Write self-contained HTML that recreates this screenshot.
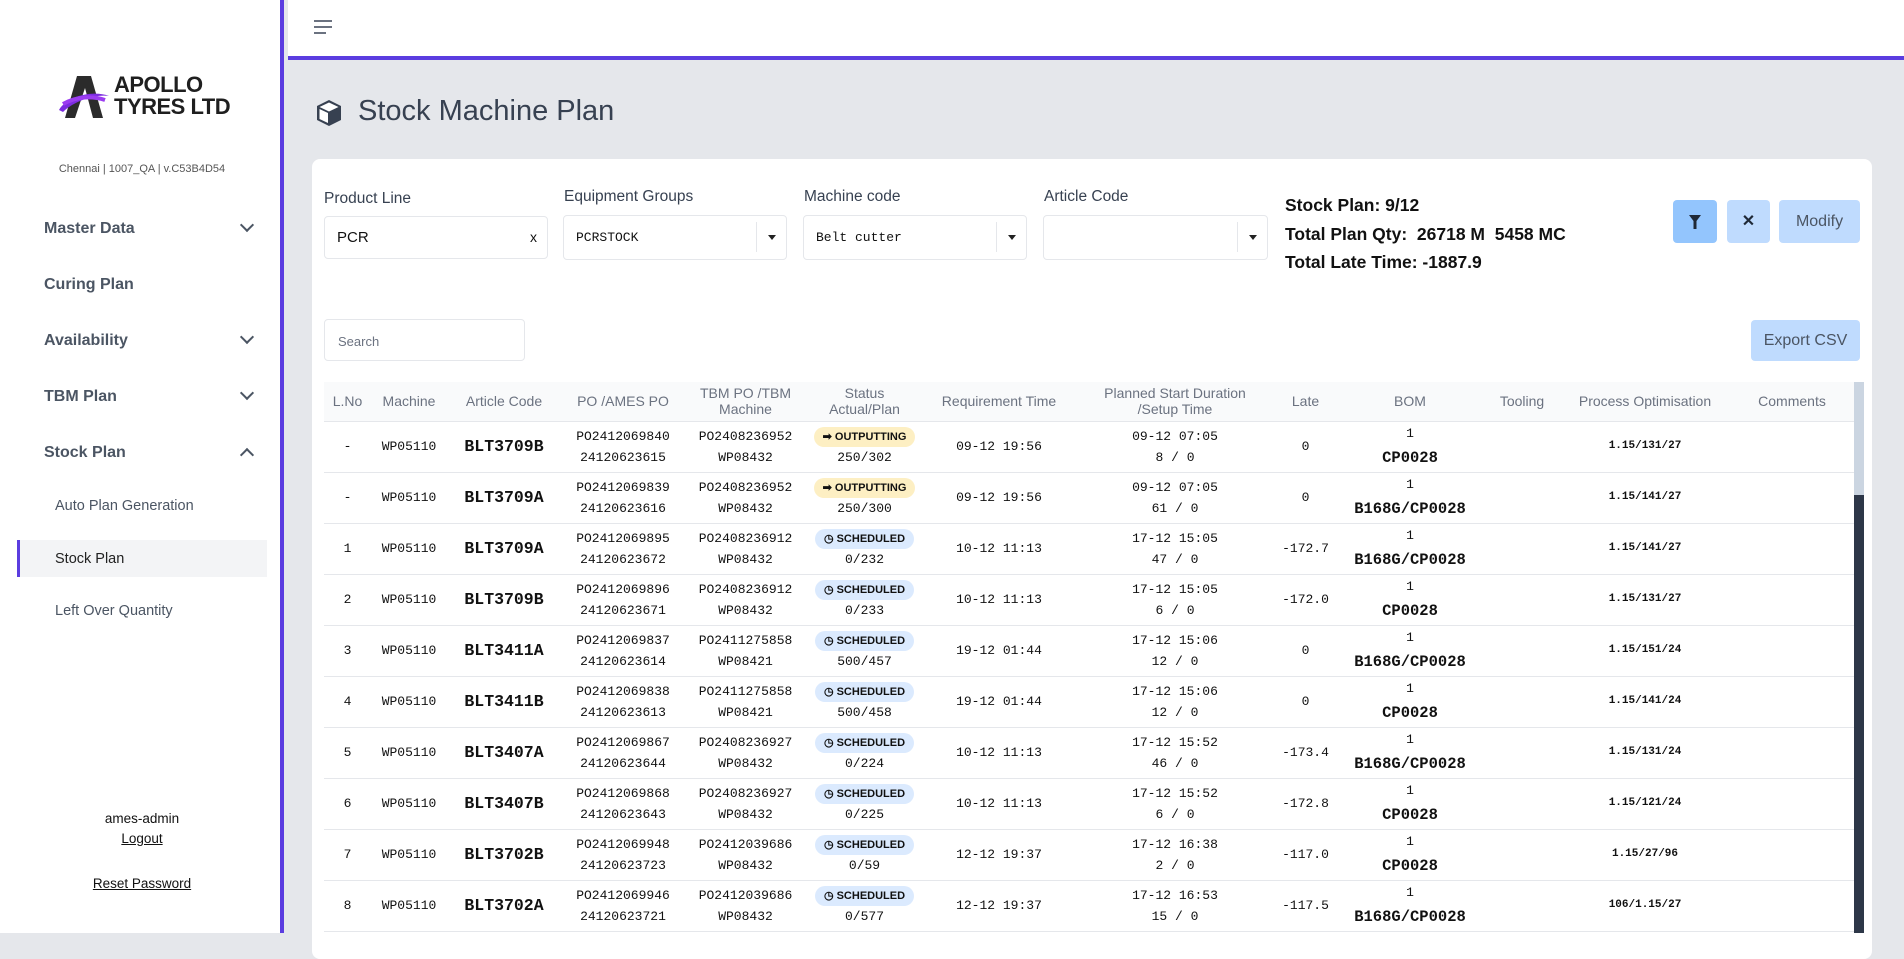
<!DOCTYPE html>
<html><head><meta charset="utf-8"><style>
*{box-sizing:border-box;margin:0;padding:0}
html{background:#e5e7eb}
body{width:1904px;height:933px;overflow:hidden;background:#e5e7eb;font-family:"Liberation Sans",sans-serif;position:relative}
.side{position:absolute;left:0;top:0;width:284px;height:933px;background:#fff;border-right:4px solid #5b3de0}
.top{position:absolute;left:288px;top:0;right:0;height:60px;background:#fff;border-bottom:4px solid #5b3de0}
.mi{position:absolute;left:44px;font-size:16px;font-weight:bold;color:#4b5563}
.chev{position:absolute;left:242px;width:10px;height:10px;border-right:2.5px solid #4b5563;border-bottom:2.5px solid #4b5563}
.si{position:absolute;left:55px;font-size:14.5px;color:#4b5563}
.card{position:absolute;left:312px;top:159px;width:1560px;height:800px;background:#fff;border-radius:8px}
.lbl{position:absolute;top:190px;font-size:15.5px;color:#374151}
.inp{position:absolute;top:216px;height:43px;border:1px solid #e5e7eb;border-radius:4px;background:#fff;font-family:"Liberation Mono",monospace;font-size:13px;color:#111;padding:14px 0 0 12px}
.dd{position:absolute;right:0;top:6px;width:30px;height:30px;border-left:1px solid #e5e7eb}
.dd:after{content:"";position:absolute;left:11px;top:13px;border:4px solid transparent;border-top:5px solid #222}
.st{position:absolute;left:1285px;font-size:17.5px;font-weight:bold;color:#111}
.btn{position:absolute;top:200px;height:43px;border-radius:4px;background:#bfdbfe;color:#4b5563;font-size:16px;text-align:center;line-height:43px}
table{position:absolute;left:324px;top:382px;width:1530px;border-collapse:collapse;table-layout:fixed}
th{height:39px;background:#f9fafb;color:#6b7280;font-weight:normal;font-size:14px;line-height:16px;border-bottom:1px solid #e5e7eb}
td{height:51px;text-align:center;font-family:"Liberation Mono",monospace;font-size:13px;color:#111;border-bottom:1px solid #e5e7eb;line-height:21px;vertical-align:middle}
td.ac{font-size:16.5px;font-weight:bold}
.bom{line-height:24px}.bom b{font-size:15.5px}
.bd{display:inline-block;height:20px;line-height:20px;border-radius:10px;padding:0 9px;font-size:11px;font-weight:bold;font-family:"Liberation Sans",sans-serif}
.o{background:#fdefc3}.s{background:#dbeafe}
td.po{font-size:11px;font-weight:bold}
</style></head><body>
<div class="side">
  <svg style="position:absolute;left:57px;top:74px" width="54" height="46" viewBox="0 0 54 46"><path d="M8 44 L20 2 L34 2 L46 44 L36 44 L28 14 L18 44 Z" fill="#2b2b2b"/><path d="M2 36 C10 22,36 16,52 22 C40 20,18 26,6 38 Z" fill="#7c2ce0"/><path d="M6 30 C20 22,36 22,48 26" stroke="#9b3cf0" stroke-width="4" fill="none"/></svg>
  <div style="position:absolute;left:114px;top:74px;font-size:22px;font-weight:bold;line-height:22px;color:#1f1f1f;letter-spacing:-0.5px">APOLLO<br>TYRES LTD</div>
  <div style="position:absolute;left:0;width:284px;text-align:center;top:163px;font-size:11px;color:#555">Chennai | 1007_QA | v.C53B4D54</div>
  <div class="mi" style="top:220px">Master Data</div><div class="chev" style="top:220px;transform:rotate(45deg)"></div>
  <div class="mi" style="top:276px">Curing Plan</div>
  <div class="mi" style="top:332px">Availability</div><div class="chev" style="top:332px;transform:rotate(45deg)"></div>
  <div class="mi" style="top:388px">TBM Plan</div><div class="chev" style="top:388px;transform:rotate(45deg)"></div>
  <div class="mi" style="top:444px">Stock Plan</div><div class="chev" style="top:450px;transform:rotate(225deg)"></div>
  <div class="si" style="top:498px">Auto Plan Generation</div>
  <div style="position:absolute;left:17px;top:540px;width:250px;height:37px;background:#f3f4f6;border-left:3px solid #5b3de0"></div>
  <div class="si" style="top:551px;color:#222">Stock Plan</div>
  <div class="si" style="top:603px">Left Over Quantity</div>
  <div style="position:absolute;left:0;width:284px;text-align:center;top:811px;font-size:13.5px;color:#111">ames-admin</div>
  <div style="position:absolute;left:0;width:284px;text-align:center;top:831px;font-size:13.5px;color:#111;text-decoration:underline">Logout</div>
  <div style="position:absolute;left:0;width:284px;text-align:center;top:876px;font-size:13.5px;color:#111;text-decoration:underline">Reset Password</div>
</div>
<div class="top"><div style="position:absolute;left:26px;top:20px;width:18px;height:2px;background:#6b7280"></div><div style="position:absolute;left:26px;top:26px;width:18px;height:2px;background:#6b7280"></div><div style="position:absolute;left:26px;top:32px;width:12px;height:2px;background:#6b7280"></div></div>
<svg style="position:absolute;left:315px;top:98px" width="28" height="30" viewBox="0 0 28 30"><path d="M14 2 L26 8 L26 22 L14 28 L2 22 L2 8 Z" fill="#374151"/><path d="M14 4.5 L23.5 9 L14 13.5 L4.5 9 Z" fill="#fff"/><path d="M4.5 11 L13 15 L13 25 L4.5 21 Z" fill="#fff"/></svg>
<div style="position:absolute;left:358px;top:95px;font-size:29px;color:#374151">Stock Machine Plan</div>
<div class="card"></div>
<div class="lbl" style="left:324px">Product Line</div>
<div class="lbl" style="left:564px;top:188px">Equipment Groups</div>
<div class="lbl" style="left:804px;top:188px">Machine code</div>
<div class="lbl" style="left:1044px;top:188px">Article Code</div>
<div class="inp" style="left:324px;width:224px;font-family:'Liberation Sans',sans-serif;font-size:15px;padding-top:12px">PCR<span style="position:absolute;right:10px;font-size:14px">x</span></div>
<div class="inp" style="left:563px;width:224px;top:215px;height:45px">PCRSTOCK<div class="dd"></div></div>
<div class="inp" style="left:803px;width:224px;top:215px;height:45px">Belt cutter<div class="dd"></div></div>
<div class="inp" style="left:1043px;width:225px;top:215px;height:45px"><div class="dd"></div></div>
<div class="st" style="top:195px">Stock Plan: 9/12</div>
<div class="st" style="top:224px">Total Plan Qty:&nbsp; 26718 M&nbsp; 5458 MC</div>
<div class="st" style="top:252px">Total Late Time: -1887.9</div>
<div class="btn" style="left:1673px;width:44px;background:#93c5fd"><svg width="12" height="14" viewBox="0 0 12 14" style="vertical-align:middle"><path d="M0 0 H12 L7.5 6 V14 H4.5 V6 Z" fill="#1f2937"/></svg></div>
<div class="btn" style="left:1727px;width:43px;font-weight:bold;color:#1f2937">✕</div>
<div class="btn" style="left:1779px;width:81px">Modify</div>
<div style="position:absolute;left:324px;top:319px;width:201px;height:42px;border:1px solid #e5e7eb;border-radius:4px;font-size:13px;color:#6b7280;padding:14px 0 0 13px">Search</div>
<div class="btn" style="left:1751px;top:320px;width:109px;height:41px;line-height:41px">Export CSV</div>
<table>
<colgroup><col style="width:47px"><col style="width:76px"><col style="width:114px"><col style="width:124px"><col style="width:121px"><col style="width:117px"><col style="width:152px"><col style="width:200px"><col style="width:61px"><col style="width:148px"><col style="width:76px"><col style="width:170px"><col style="width:124px"></colgroup>
<tr><th>L.No</th><th>Machine</th><th>Article Code</th><th>PO /AMES PO</th><th>TBM PO /TBM<br>Machine</th><th>Status<br>Actual/Plan</th><th>Requirement Time</th><th>Planned Start Duration<br>/Setup Time</th><th>Late</th><th>BOM</th><th>Tooling</th><th>Process Optimisation</th><th>Comments</th></tr>
<tr><td>-</td><td>WP05110</td><td class="ac">BLT3709B</td><td>PO2412069840<br>24120623615</td><td>PO2408236952<br>WP08432</td><td><span class="bd o">➡ OUTPUTTING</span><br>250/302</td><td>09-12 19:56</td><td>09-12 07:05<br>8 / 0</td><td>0</td><td class="bom">1<br><b>CP0028</b></td><td></td><td class="po">1.15/131/27</td><td></td></tr>
<tr><td>-</td><td>WP05110</td><td class="ac">BLT3709A</td><td>PO2412069839<br>24120623616</td><td>PO2408236952<br>WP08432</td><td><span class="bd o">➡ OUTPUTTING</span><br>250/300</td><td>09-12 19:56</td><td>09-12 07:05<br>61 / 0</td><td>0</td><td class="bom">1<br><b>B168G/CP0028</b></td><td></td><td class="po">1.15/141/27</td><td></td></tr>
<tr><td>1</td><td>WP05110</td><td class="ac">BLT3709A</td><td>PO2412069895<br>24120623672</td><td>PO2408236912<br>WP08432</td><td><span class="bd s">◷ SCHEDULED</span><br>0/232</td><td>10-12 11:13</td><td>17-12 15:05<br>47 / 0</td><td>-172.7</td><td class="bom">1<br><b>B168G/CP0028</b></td><td></td><td class="po">1.15/141/27</td><td></td></tr>
<tr><td>2</td><td>WP05110</td><td class="ac">BLT3709B</td><td>PO2412069896<br>24120623671</td><td>PO2408236912<br>WP08432</td><td><span class="bd s">◷ SCHEDULED</span><br>0/233</td><td>10-12 11:13</td><td>17-12 15:05<br>6 / 0</td><td>-172.0</td><td class="bom">1<br><b>CP0028</b></td><td></td><td class="po">1.15/131/27</td><td></td></tr>
<tr><td>3</td><td>WP05110</td><td class="ac">BLT3411A</td><td>PO2412069837<br>24120623614</td><td>PO2411275858<br>WP08421</td><td><span class="bd s">◷ SCHEDULED</span><br>500/457</td><td>19-12 01:44</td><td>17-12 15:06<br>12 / 0</td><td>0</td><td class="bom">1<br><b>B168G/CP0028</b></td><td></td><td class="po">1.15/151/24</td><td></td></tr>
<tr><td>4</td><td>WP05110</td><td class="ac">BLT3411B</td><td>PO2412069838<br>24120623613</td><td>PO2411275858<br>WP08421</td><td><span class="bd s">◷ SCHEDULED</span><br>500/458</td><td>19-12 01:44</td><td>17-12 15:06<br>12 / 0</td><td>0</td><td class="bom">1<br><b>CP0028</b></td><td></td><td class="po">1.15/141/24</td><td></td></tr>
<tr><td>5</td><td>WP05110</td><td class="ac">BLT3407A</td><td>PO2412069867<br>24120623644</td><td>PO2408236927<br>WP08432</td><td><span class="bd s">◷ SCHEDULED</span><br>0/224</td><td>10-12 11:13</td><td>17-12 15:52<br>46 / 0</td><td>-173.4</td><td class="bom">1<br><b>B168G/CP0028</b></td><td></td><td class="po">1.15/131/24</td><td></td></tr>
<tr><td>6</td><td>WP05110</td><td class="ac">BLT3407B</td><td>PO2412069868<br>24120623643</td><td>PO2408236927<br>WP08432</td><td><span class="bd s">◷ SCHEDULED</span><br>0/225</td><td>10-12 11:13</td><td>17-12 15:52<br>6 / 0</td><td>-172.8</td><td class="bom">1<br><b>CP0028</b></td><td></td><td class="po">1.15/121/24</td><td></td></tr>
<tr><td>7</td><td>WP05110</td><td class="ac">BLT3702B</td><td>PO2412069948<br>24120623723</td><td>PO2412039686<br>WP08432</td><td><span class="bd s">◷ SCHEDULED</span><br>0/59</td><td>12-12 19:37</td><td>17-12 16:38<br>2 / 0</td><td>-117.0</td><td class="bom">1<br><b>CP0028</b></td><td></td><td class="po">1.15/27/96</td><td></td></tr>
<tr><td>8</td><td>WP05110</td><td class="ac">BLT3702A</td><td>PO2412069946<br>24120623721</td><td>PO2412039686<br>WP08432</td><td><span class="bd s">◷ SCHEDULED</span><br>0/577</td><td>12-12 19:37</td><td>17-12 16:53<br>15 / 0</td><td>-117.5</td><td class="bom">1<br><b>B168G/CP0028</b></td><td></td><td class="po">106/1.15/27</td><td></td></tr>
</table>
<div style="position:absolute;left:1854px;top:382px;width:10px;height:551px;background:#cbd5e1"></div>
<div style="position:absolute;left:1854px;top:495px;width:10px;height:438px;background:#2d3748"></div>
</body></html>
